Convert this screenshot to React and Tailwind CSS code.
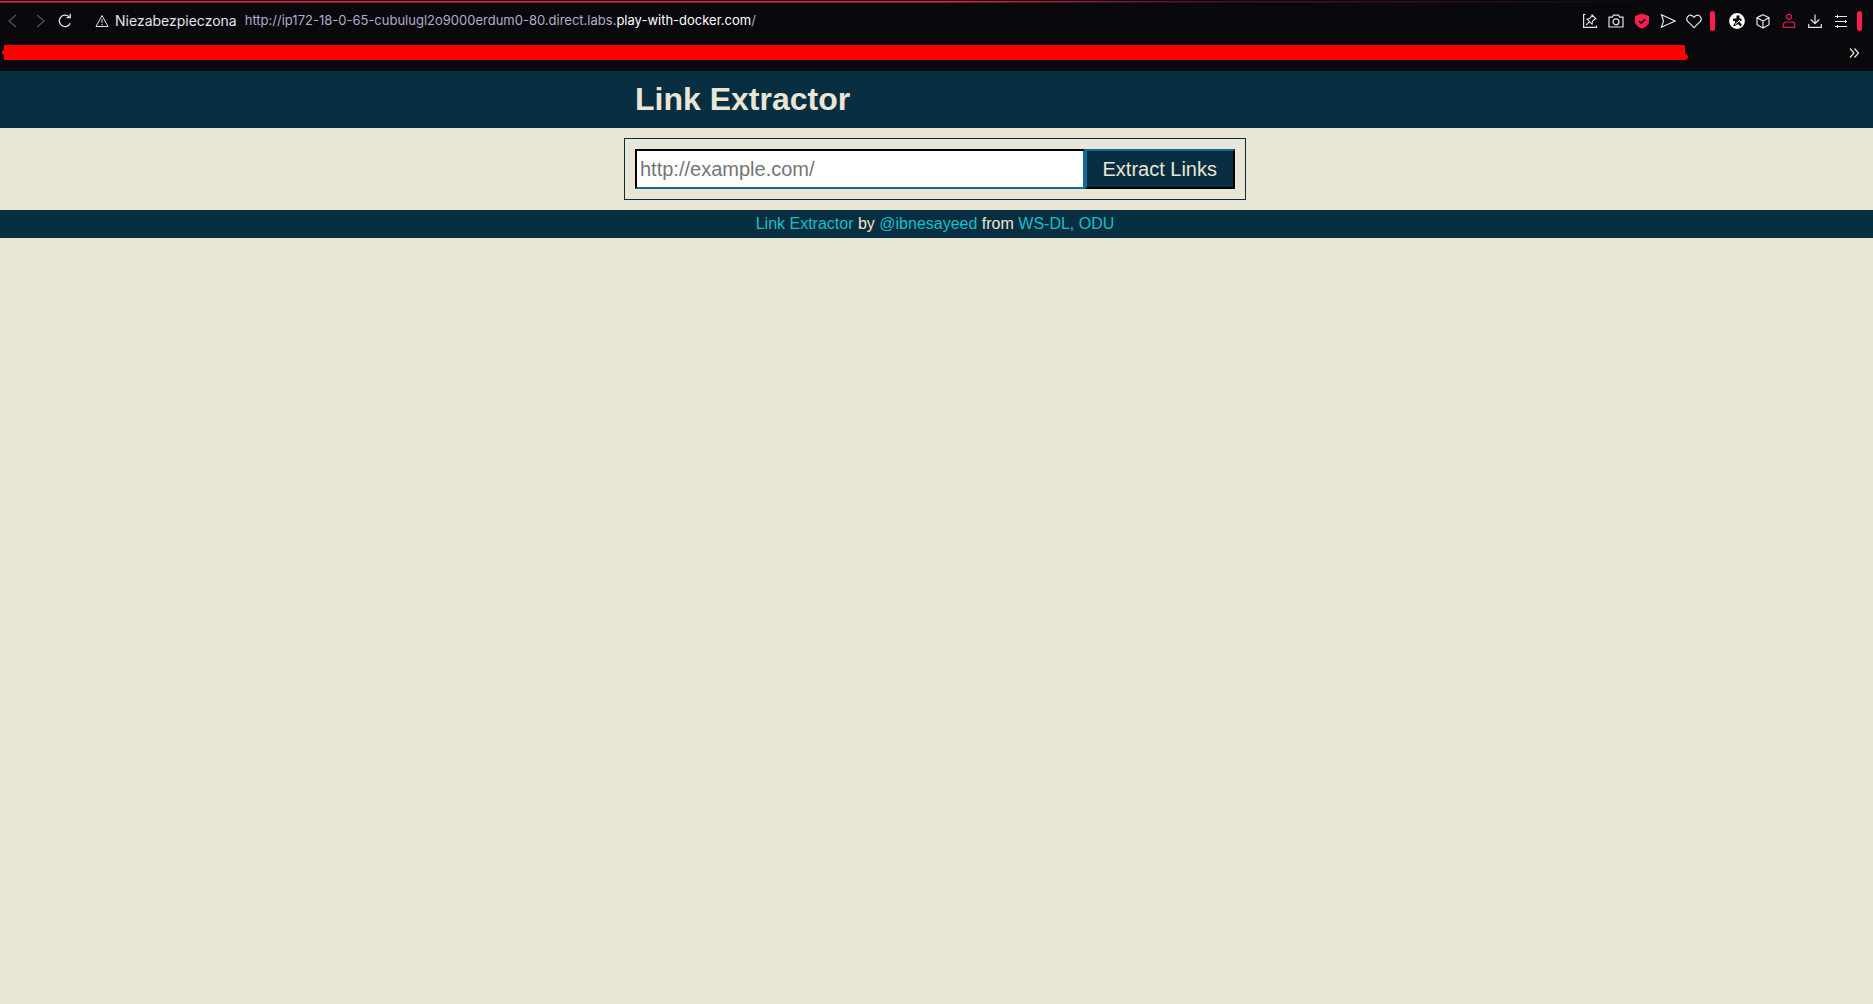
const stroke = { fill: 'none', stroke: 'currentColor', strokeWidth: 1.2 };

function Icon({ label, className = 'text-[#e4e2ea]', children }) {
  return (
    <button type="button" aria-label={label} className={`flex size-4 shrink-0 items-center justify-center ${className}`}>
      <svg viewBox="0 0 16 16" className="size-4 shrink-0" {...stroke}>
        {children}
      </svg>
    </button>
  );
}

function Marker() {
  return <span className="-ml-0.5 h-5 w-[5px] shrink-0 rounded-sm bg-[#fa1e4e]" />;
}

function BrowserBar() {
  return (
    <div className="bg-[#09080d] font-[Inter,sans-serif]">
      <div className="h-px" />
      <div className="h-px bg-linear-to-r from-[#fa1e4e] from-50% via-[#5a1226] via-63% to-[#09080d] to-90%" />
      <div className="h-px bg-linear-to-r from-[#7d1530] from-50% via-[#2e0d18] via-63% to-[#09080d] to-90%" />
      <div className="flex h-9 items-center justify-between pr-[11px] pl-1">
        <div className="flex items-center">
          <Icon label="Wstecz" className="text-[#55535c]"><path d="M12 2 5 8l7 6" /></Icon>
          <span className="w-3" />
          <Icon label="Dalej" className="text-[#55535c]"><path d="m5 2 7 6-7 6" /></Icon>
          <span className="w-[9px]" />
          <Icon label="Odśwież">
            <path d="M13.200 10.200A5.700 5.700 0 1 1 12 3.800M9.600 4.600h3.600V1" strokeWidth="1.400" />
          </Icon>
          <span className="w-[21px]" />
          <Icon label="Informacje o witrynie">
            <path d="M8 2.500 14 13.500H2ZM8 6v4M8 11v1.400" strokeWidth="1" strokeLinejoin="round" />
          </Icon>
          <span className="ml-[5px] text-sm text-[#e4e2ea]">Niezabezpieczona</span>
          <span className="ml-2 text-[13px] text-[#b5aac8]">
            http://ip172-18-0-65-cubulugl2o9000erdum0-80.direct.labs.<span className="text-white">play-with-docker.com</span>/
          </span>
        </div>
        <div className="flex items-center gap-[10px]">
          <Icon label="Przypnij">
            <path d="M3.500 1.500H1.600v12.900h12.900v-2" />
            <path d="m4.200 12 3.200-3.200M5 6.200l5 5 .6-3.200 3-2.600-3.200-3.200-2.500 3ZM9.600 1.500l4.900 4.900" strokeWidth="1.100" />
          </Icon>
          <Icon label="Migawka">
            <path d="M1 4.200h3.300l1.200-2h5l1.200 2H15v9.800H1Z" />
            <circle cx="8" cy="8.800" r="3" />
          </Icon>
          <Icon label="Blokowanie reklam">
            <path d="M8 .6 15 3v5.200c0 3.600-3.400 6-7 7.400-3.600-1.400-7-3.800-7-7.400V3Z" fill="#fa1e4e" stroke="none" />
            <path d="m5 8 2.200 2.200 4-4" stroke="#09080d" strokeWidth="1.600" />
          </Icon>
          <Icon label="Wyślij"><path d="M1.500 1.800 15 8 1.500 14.200l2-6.200Z" /></Icon>
          <Icon label="Ulubione">
            <path d="M8 14.600 1.700 8.400C-.9 5 2.800.7 6.300 2.700L8 4.200l1.700-1.500c3.500-2 7.200 2.300 4.600 5.700Z" />
          </Icon>
          <Marker />
          <Icon label="Dostępność" className="ml-1">
            <circle cx="8" cy="8" r="7.900" fill="#fff" stroke="none" />
            <path d="M7.500 2.500h3v3h2v2.500h-2v1l2.300 2.500-1.300 2-2.500-2.500L6 13H4l2-3.500V8H4V5.500h3.500Z" fill="#09080d" stroke="none" />
            <path d="m6 11.500 5-4.500" stroke="#fff" strokeWidth="1" />
          </Icon>
          <Icon label="Rozszerzenia">
            <path d="m8 1.700 6 3v7L8 15l-6-3.300v-7ZM2 4.700l6 3.300 6-3.300M8 8v7" />
          </Icon>
          <Icon label="Profil" className="text-[#e01d47]">
            <circle cx="8" cy="3.800" r="2.500" />
            <path d="M2.200 14.400v-2.400a3 3 0 0 1 3-3h5.600a3 3 0 0 1 3 3v2.400Z" />
          </Icon>
          <Icon label="Pobrane"><path d="M8 1.500v9M3.800 6.500 8 10.700l4.200-4.200M1.700 11v3.300h12.600V11" /></Icon>
          <Icon label="Ustawienia">
            <path d="M2 3.500h12M2 8.500h12M2 13.500h12M4.500 2v3M12.500 7v3M4.500 12v3" strokeWidth="1" />
          </Icon>
          <Marker />
        </div>
      </div>
      <div className="flex h-8 items-start pr-[11px] pl-1">
        <div className="relative mt-[6px] mr-[161px] h-[15px] flex-1 bg-[#ff0000]">
          <span className="absolute top-[5px] -left-0.5 h-[5px] w-0.5 rounded-l-sm bg-[#ff0000]" />
          <span className="absolute -right-[3px] bottom-0 h-[6px] w-[3px] rounded-r-sm bg-[#ff0000]" />
        </div>
        <Icon label="Więcej zakładek" className="mt-[6px]"><path d="m4 3.500 4 4.500-4 4.500M8.500 3.500l4 4.500-4 4.500" /></Icon>
      </div>
    </div>
  );
}

export default function App() {
  return (
    <div className="min-h-screen bg-[#eae6d5] font-['Liberation_Sans',Arial,sans-serif] text-base text-[#eee8d5]">
      <BrowserBar />
      <header className="bg-[#082e41] py-[10px] pr-[3px]">
        <h1 className="mx-auto max-w-[600px] text-[32px] leading-[37px] font-bold text-[#eae6d5]">Link Extractor</h1>
      </header>
      <main className="py-[10px] pr-[3px]">
        <form className="mx-auto flex max-w-[622px] border border-[#082e41] p-[10px] text-xl" onSubmit={(e) => e.preventDefault()}>
          <input
            type="text"
            aria-label="URL"
            placeholder="http://example.com/"
            className="h-10 min-w-0 flex-3 border-2 border-t-black border-r-[#0f6c9a] border-b-[#0f6c9a] border-l-black bg-white px-[3px] text-black placeholder:text-[#757575]"
          />
          <button
            type="submit"
            className="h-10 flex-1 border-2 border-t-[#0f6c9a] border-r-black border-b-black border-l-[#0f6c9a] bg-[#082e41] whitespace-nowrap text-[#eae6d5]"
          >
            Extract Links
          </button>
        </form>
      </main>
      <footer className="bg-[#082e41] py-[5px] pr-[3px] text-center leading-[18px]">
        <a href="#extractor" className="text-[#16bfc9]">Link Extractor</a> by{' '}
        <a href="#author" className="text-[#16bfc9]">@ibnesayeed</a> from{' '}
        <a href="#group" className="text-[#16bfc9]">WS-DL, ODU</a>
      </footer>
    </div>
  );
}
